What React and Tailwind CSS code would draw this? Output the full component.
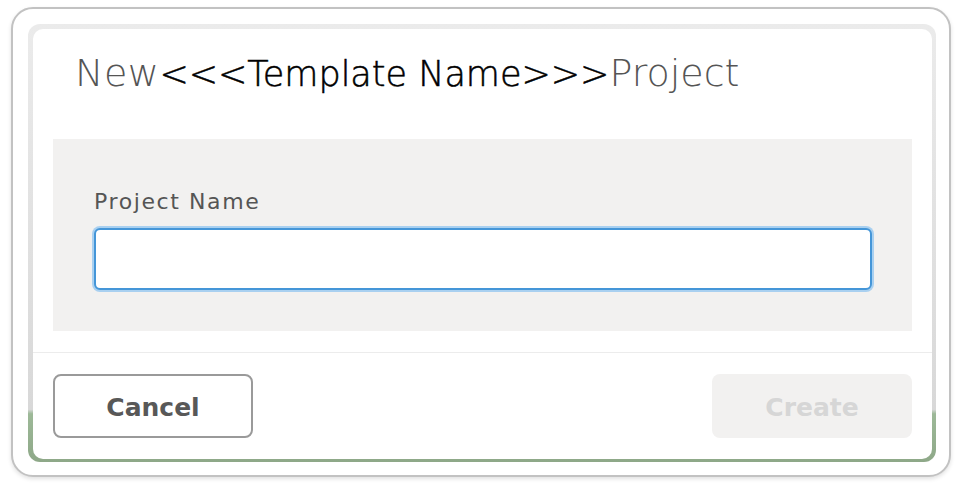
export default function App() {
  return (
    <div className="w-[962px] h-[492px] bg-white pl-[11px] pt-[7px]">
      <div className="w-[940px] h-[470px] rounded-[22px] border-2 border-[#c2c2c2] bg-white shadow-[0_2px_4px_rgba(0,0,0,0.12)] pl-[15px] pt-[15px]">
        <div className="w-[908px] h-[438px] rounded-[12px] bg-[linear-gradient(to_bottom,#ebebeb_0%,#d8d8d8_88%,#9db998_89%,#8ea888_100%)] pl-[5px] pt-[5px]">
          <div className="w-[899px] h-[430px] rounded-[10px] bg-white flex flex-col font-['DejaVu_Sans',sans-serif]">
            <h1 className="h-[110px] pl-[42px] pt-[21px] leading-[46px] flex items-baseline font-extralight">
              <span className="text-[#555] text-[38px] tracking-[0.5px]">New</span>
              <span className="text-black text-[35px] [-webkit-text-stroke:0.5px_black]">&lt;&lt;&lt;Template Name&gt;&gt;&gt;</span>
              <span className="text-[#555] text-[38px]">Project</span>
            </h1>
            <div className="mx-[20px] h-[192px] bg-[#f2f1f0] px-[41px] pt-[50px]">
              <label className="block text-[22px] leading-[26px] tracking-[1.6px] text-[#555]">Project Name</label>
              <input
                className="mt-[13px] block w-[778px] h-[62px] rounded-[6px] border-2 border-[#4596d8] bg-white outline-none ring-2 ring-[#a9d0f0]"
                type="text"
              />
            </div>
            <div className="mt-[21px] border-t border-[#ececec]" />
            <div className="flex justify-between px-[20px] pt-[21px]">
              <button className="w-[200px] h-[64px] rounded-[8px] border-2 border-[#9a9a9a] bg-white pt-[3px] text-[25px] font-bold text-[#585858]">
                Cancel
              </button>
              <button className="w-[200px] h-[64px] rounded-[8px] bg-[#f2f1f0] pt-[3px] text-[25px] font-bold text-[#d6d6d6]">
                Create
              </button>
            </div>
          </div>
        </div>
      </div>
    </div>
  );
}
